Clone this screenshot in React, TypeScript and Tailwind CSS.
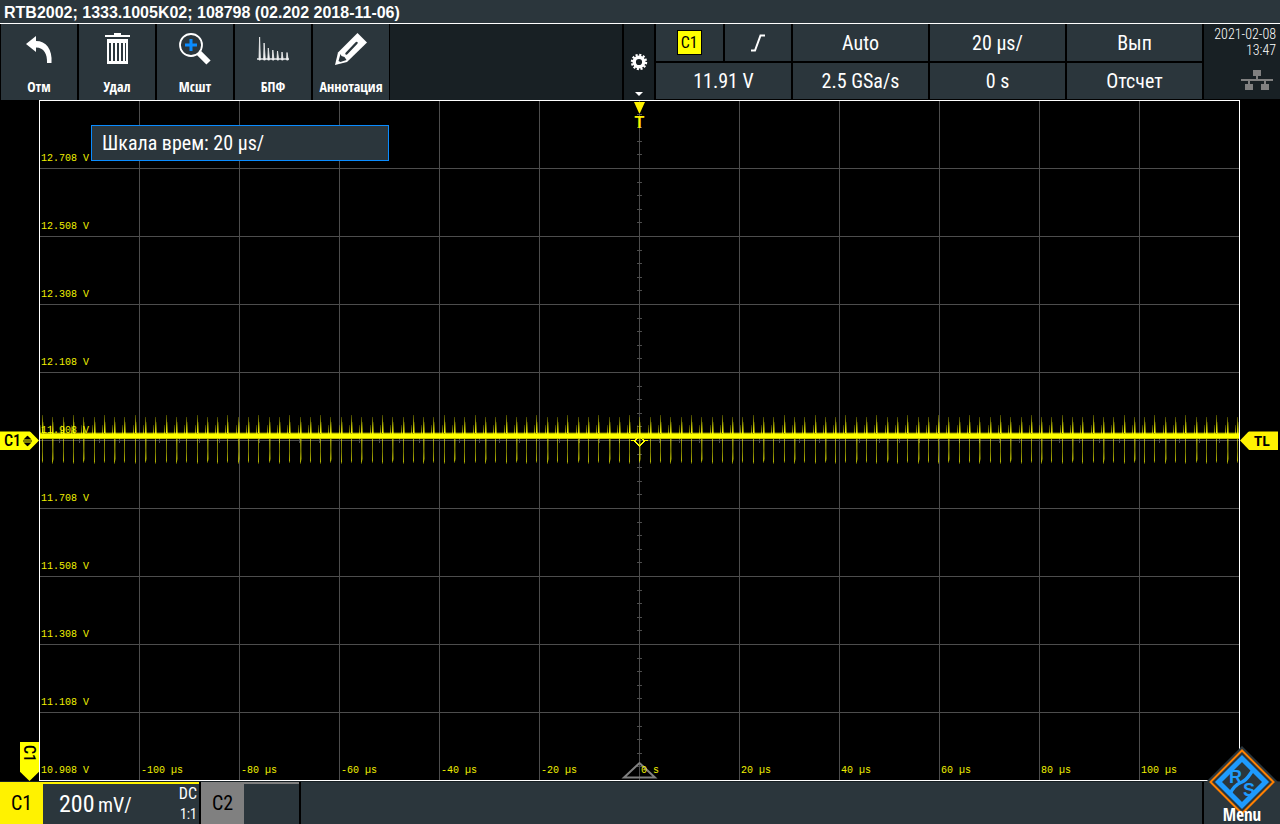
import type { ReactNode } from 'react';

const tools = [
  {
    label: 'Отм',
    icon: <path d="M7 16 17 8v5c10 0 16.500 8 15.500 22h-4.500c.5-9-3-15.500-11-15.500V24Z" fill="#fff" />,
  },
  {
    label: 'Удал',
    icon: (
      <path
        fill="#fff"
        fillRule="evenodd"
        d="M17 5h7v2h9v2H8V7h9ZM10 11h21v25H10ZM12 15v18h2V15ZM16 15v18h2V15ZM20 15v18h2V15ZM24 15v18h2V15ZM28 15v18h1V15Z"
      />
    ),
  },
  {
    label: 'Мсшт',
    icon: (
      <>
        <path d="m24 25 9.500 9.500" stroke="#fff" strokeWidth="6" />
        <circle cx="16" cy="17" r="11" fill="none" stroke="#fff" strokeWidth="1.800" />
        <path d="M10 17h12M16 11v12" stroke="#0a8cff" strokeWidth="3" />
      </>
    ),
  },
  {
    label: 'БПФ',
    icon: (
      <>
        <path d="M4 31h32" stroke="#e5e7e8" strokeWidth="1.500" />
        <path
          d="M6 32l.6-23 .8 23zM10.600 32l.5-17 1.200 17zM14.800 32l.5-12 1.200 12zM19.300 32l.5-10 1.200 10zM24 32l.5-9 1.200 9zM28.500 32l.5-8 1.200 8zM33.500 32l.5-7.500 1.200 7.500z"
          fill="#fff"
          stroke="#e5e7e8"
          strokeWidth=".9"
        />
      </>
    ),
  },
  {
    label: 'Аннотация',
    icon: (
      <>
        <path d="m26.500 5 9.500 9.500L16 34 4 37 7 24.500Z" fill="#fff" />
        <path d="m9.500 26-2 7 2 1 6-2-2-3-3-1Z" fill="#2b363c" />
        <path d="m15.500 25.500 10-10.500" stroke="#2b363c" strokeWidth="2.500" strokeLinecap="round" />
      </>
    ),
  },
];

const readings = [
  ['Auto', '2.5 GSa/s'],
  ['20 µs/', '0 s'],
  ['Вып', 'Отсчет'],
];

const volts = ['12.708', '12.508', '12.308', '12.108', '11.908', '11.708', '11.508', '11.308', '11.108', '10.908'];
const times = ['-100 µs', '-80 µs', '-60 µs', '-40 µs', '-20 µs', '0 s', '20 µs', '40 µs', '60 µs', '80 µs', '100 µs'];

function Cell({ children }: { children: ReactNode }) {
  return <div className="flex items-center justify-center bg-[#2b363c] text-xl leading-6">{children}</div>;
}

function Toolbar() {
  return (
    <div className="flex h-[76px] gap-0.5 bg-black pl-px">
      {tools.map((t) => (
        <button key={t.label} type="button" className="flex w-[76px] flex-col items-center justify-between bg-[#2b363c] pt-1 pb-[3px]">
          <svg viewBox="0 0 40 40" className="size-10">{t.icon}</svg>
          <span className="font-['Open_Sans_Condensed','Roboto_Condensed',sans-serif] text-sm leading-5 font-bold">{t.label}</span>
        </button>
      ))}
      <div className="-ml-px flex-1 bg-[#182024]" />
      <button type="button" aria-label="Setup" className="flex w-[30px] flex-col items-center justify-end bg-[#182024] pb-1">
        <svg viewBox="0 0 20 46" className="h-[46px] w-5">
          <circle cx="10" cy="12" r="4.800" fill="none" stroke="#fff" strokeWidth="3.400" />
          <circle cx="10" cy="12" r="7" fill="none" stroke="#fff" strokeWidth="2.400" strokeDasharray="2.100 1.565" />
          <path d="M6 42h8l-4 4Z" fill="#fff" />
        </svg>
      </button>
      <div className="grid grid-cols-[136px_136px_136px_136px] gap-px bg-black">
        <div className="mr-px grid grid-rows-[37px_36px] gap-0.5">
          <div className="grid grid-cols-2 gap-0.5">
            <Cell>
              <span className="flex size-[25px] items-center justify-center border border-black bg-[#ffff00] text-base leading-none text-black">C1</span>
            </Cell>
            <Cell>
              <svg viewBox="0 0 14 18" className="h-[18px] w-3.5">
                <path d="M0 16.500h4L9.500 1.500H14" fill="none" stroke="#fff" strokeWidth="2" />
              </svg>
            </Cell>
          </div>
          <Cell>11.91 V</Cell>
        </div>
        {readings.map(([top, bottom]) => (
          <div key={top} className="mr-px grid grid-rows-[37px_36px] gap-0.5">
            <Cell>{top}</Cell>
            <Cell>{bottom}</Cell>
          </div>
        ))}
      </div>
      <div className="mb-px -ml-px flex w-[76px] flex-col items-end justify-between bg-[#182024] pt-0.5 pr-1 pb-[9px]">
        <div className="text-right text-sm leading-4 font-light">
          2021-02-08
          <br />
          13:47
        </div>
        <svg viewBox="0 0 36 20" className="h-5 w-9" shapeRendering="crispEdges">
          <path fill="#808080" d="M13 0h8v6h-3v3h15v2h-7v3h3v6h-8v-6h3v-3H10v3h3v6H5v-6h3v-3H1V9h15V6h-3Z" />
        </svg>
      </div>
    </div>
  );
}

function Graph() {
  const spikes = Array.from({ length: 117 }, (_, i) => Math.round(3 + i * 10.3));
  return (
    <svg viewBox="0 0 1201 681" className="block w-full" shapeRendering="crispEdges">
      <defs>
        <linearGradient id="up" x1="0" y1="1" x2="0" y2="0">
          <stop offset="0" stopColor="#ffff00" />
          <stop offset="0.5" stopColor="#ffff00" stopOpacity="0.65" />
          <stop offset="1" stopColor="#ffff00" stopOpacity="0.25" />
        </linearGradient>
        <linearGradient id="down" x1="0" y1="0" x2="0" y2="1">
          <stop offset="0" stopColor="#ffff00" stopOpacity="0.6" />
          <stop offset="0.5" stopColor="#ffff00" stopOpacity="0.45" />
          <stop offset="0.9" stopColor="#ffff00" stopOpacity="0.7" />
          <stop offset="1" stopColor="#ffff00" stopOpacity="0.15" />
        </linearGradient>
      </defs>

      {/* grid */}
      <g fill="#4d4d4d">
        {Array.from({ length: 11 }, (_, i) => (
          <rect key={i} x={(i + 1) * 100} y="0" width="1" height="680" />
        ))}
        {Array.from({ length: 9 }, (_, i) => (
          <rect key={i} x="0" y={(i + 1) * 68} width="1200" height="1" />
        ))}
        {Array.from({ length: 49 }, (_, i) => (
          <rect key={i} x="598" y={Math.round((i + 1) * 13.6)} width="5" height="1" />
        ))}
        {Array.from({ length: 59 }, (_, i) => (
          <rect key={i} x={(i + 1) * 20} y="338" width="1" height="5" />
        ))}
      </g>

      <path d="M585 677.500 600.500 663 616 677.500Z" fill="none" stroke="#808080" strokeWidth="2" shapeRendering="auto" />

      <g className="font-['Liberation_Mono',monospace] text-[10px]" fill="#f0f000">
        {volts.map((v, i) => (
          <text key={v} x="2" y={61 + i * 68}>{v} V</text>
        ))}
        {times.map((t, i) => (
          <text key={t} x={102 + i * 100} y="673">{t}</text>
        ))}
      </g>

      {/* channel 1 trace */}
      {spikes.map((x, i) => (
        <g key={x}>
          <rect x={x} y={i % 3 === 0 ? 315 : 317} width="1" height="18" fill="url(#up)" />
          <rect x={x + 1} y="322" width="1" height="12" fill="url(#up)" opacity="0.6" />
          <rect x={x - 2} y="325" width="1" height="9" fill="url(#up)" opacity="0.7" />
          <rect x={x} y="339" width="1" height={i % 2 ? 25 : 24} fill="url(#down)" />
          {i % 3 === 1 && <rect x={x + 1} y="339" width="1" height="22" fill="url(#down)" opacity="0.5" />}
        </g>
      ))}
      <rect x="1" y="332" width="1199" height="1" fill="#ffff00" opacity="0.25" />
      <rect x="1" y="333" width="1199" height="6" fill="#ffff00" opacity="0.75" />
      <rect x="1" y="334" width="1199" height="4" fill="#ffff00" />
      <path d="M592 340.500h4l4.500-4 4.500 4h4M595.500 341l5 5 5-5" fill="none" stroke="#ffff00" />

      {/* trigger position */}
      <path d="M595 2h11l-5 11h-1Z" fill="#fff200" shapeRendering="auto" />
      <text x="600.500" y="28" textAnchor="middle" fill="#fff200" className="font-['Liberation_Sans',sans-serif] text-base font-bold">T</text>

      <rect x="0.500" y="0.500" width="1200" height="680" fill="none" stroke="#fff" />
    </svg>
  );
}

function Logo() {
  return (
    <svg viewBox="-36 -36 72 72" className="absolute -top-9 left-1/2 size-[72px] -translate-x-1/2">
      <path d="M0-36 36 0 0 36-36 0Z" fill="#2b363c" />
      <path d="M0-31.500 31.500 0 0 31.500-31.500 0Z" fill="none" stroke="#ff8000" strokeWidth="2" />
      <path d="M0-23.500 23.500 0 0 23.500-23.500 0Z" fill="none" stroke="#1e9bff" strokeWidth="5" />
      <path d="M-12 12C-9 5-5 2 0 0S6-5 11-12" fill="none" stroke="#1e9bff" strokeWidth="3.500" />
      <g fill="#1e9bff" className="font-['Liberation_Sans',sans-serif] text-lg font-bold">
        <text x="-13" y="1">R</text>
        <text x="1" y="14">S</text>
      </g>
    </svg>
  );
}

export default function App() {
  return (
    <div className="flex min-h-screen flex-col bg-black font-['Roboto_Condensed','Liberation_Sans',sans-serif] text-white select-none">
      <header className="h-6 border-b border-white bg-[#2b363c] pl-1 font-['Liberation_Sans',sans-serif] text-base leading-[26px] font-bold">
        RTB2002; 1333.1005K02; 108798 (02.202 2018-11-06)
      </header>
      <Toolbar />

      <main className="relative flex">
        <div className="relative w-[39px] shrink-0">
          <div className="absolute top-1/2 left-0 flex h-[19px] w-[39px] -translate-y-1/2 items-center gap-0.5 bg-[#ffff00] pl-1 text-base leading-none font-medium text-black [clip-path:polygon(0_0,76%_0,100%_50%,76%_100%,0_100%)]">
            C1
            <svg viewBox="0 0 9 11" className="h-[11px] w-[9px]">
              <path d="M4.500 0 8.500 4h-8ZM0 5h9v1H0ZM.5 7h8l-4 4Z" />
            </svg>
          </div>
          <div className="absolute right-0 bottom-0 flex h-[39px] w-[19px] items-center justify-center bg-[#ffff00] pb-4 text-base leading-[19px] font-medium text-black [clip-path:polygon(0_0,100%_0,100%_76%,50%_100%,0_76%)] [writing-mode:vertical-rl]">
            C1
          </div>
        </div>
        <div className="min-w-0 flex-1">
          <Graph />
        </div>
        <div className="relative w-10 shrink-0">
          <div className="absolute top-1/2 left-0 flex h-[19px] w-[38px] -translate-y-1/2 items-center justify-end bg-[#fff200] pr-2 font-['Open_Sans',sans-serif] text-sm leading-none font-bold text-black [clip-path:polygon(24%_0,100%_0,100%_100%,24%_100%,0_50%)]">
            TL
          </div>
        </div>
        <div className="absolute top-[25px] left-[91px] flex h-9 w-[298px] items-center border border-[#0a8cff] bg-[#2b363c] px-2.5 text-xl leading-6">
          Шкала врем: 20 µs/
        </div>
      </main>

      <footer className="flex h-[43px] gap-0.5 border-t border-[#182024] bg-black">
        <button type="button" className="flex w-[199px] text-left">
          <span className="flex w-[43px] items-center justify-center self-stretch bg-[#fff200] text-xl text-black">C1</span>
          <span className="flex flex-1 justify-between self-stretch border-t-2 border-[#fff200] bg-[#2b363c] pr-0.5 pl-4">
            <span className="self-center pt-0.5 text-2xl leading-6">
              200 <span className="-ml-0.5 text-xl">mV/</span>
            </span>
            <span className="flex flex-col justify-between pt-0.5 text-right text-base leading-4">
              <span>DC</span>
              <span className="text-sm">1:1</span>
            </span>
          </span>
        </button>
        <button type="button" className="flex w-[98px]">
          <span className="flex w-[43px] items-center justify-center self-stretch bg-[#808080] text-xl text-black">C2</span>
          <span className="flex-1 self-stretch border-t-2 border-[#808080] bg-[#2b363c]" />
        </button>
        <div className="flex-1 bg-[#2b363c]" />
        <button type="button" className="relative flex w-[76px] items-end justify-center bg-[#2b363c]">
          <Logo />
          <span className="relative font-['Open_Sans_Condensed','Roboto_Condensed',sans-serif] text-[17px] leading-[18px] font-bold">Menu</span>
        </button>
      </footer>
    </div>
  );
}
